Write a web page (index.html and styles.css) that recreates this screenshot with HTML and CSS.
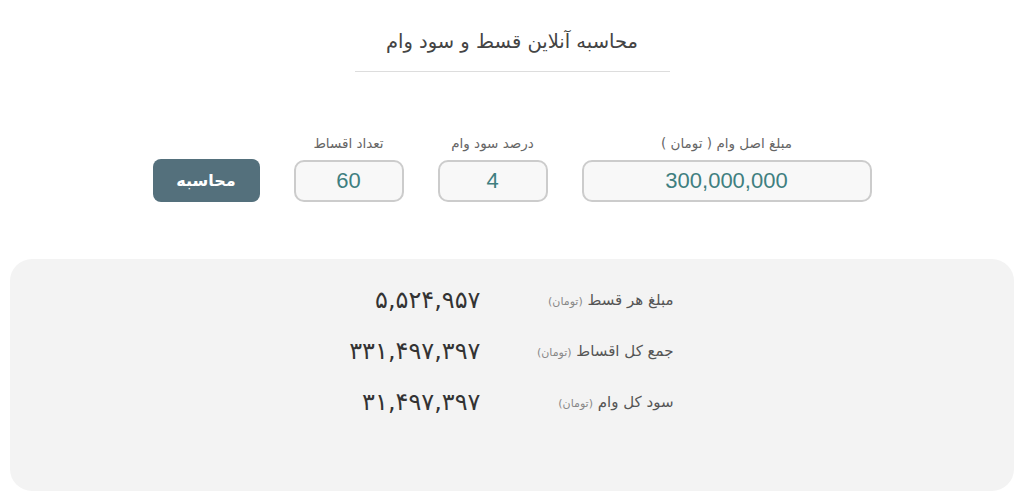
FILE: index.html
```html
<!DOCTYPE html>
<html lang="fa" dir="rtl">
<head>
    <meta charset="utf-8">
    <title>محاسبه آنلاین قسط و سود وام</title>
    <link rel="stylesheet" href="styles.css">
</head>
<body>
    <div class="calculator">
        <div class="title">
            <h1>محاسبه آنلاین قسط و سود وام</h1>
        </div>

        <div class="form">
            <div class="field field-wide">
                <label>مبلغ اصل وام ( تومان )</label>
                <input type="text" value="300,000,000">
            </div>
            <div class="field">
                <label>درصد سود وام</label>
                <input type="text" value="4">
            </div>
            <div class="field">
                <label>تعداد اقساط</label>
                <input type="text" value="60">
            </div>
            <button class="calc-btn">محاسبه</button>
        </div>

        <div class="results">
            <div class="result-row">
                <div class="result-label">مبلغ هر قسط <span class="unit">(تومان)</span></div>
                <div class="result-value">۵,۵۲۴,۹۵۷</div>
            </div>
            <div class="result-row">
                <div class="result-label">جمع کل اقساط <span class="unit">(تومان)</span></div>
                <div class="result-value">۳۳۱,۴۹۷,۳۹۷</div>
            </div>
            <div class="result-row">
                <div class="result-label">سود کل وام <span class="unit">(تومان)</span></div>
                <div class="result-value">۳۱,۴۹۷,۳۹۷</div>
            </div>
        </div>
    </div>
</body>
</html>
```

FILE: styles.css
```css
body {
    margin: 0;
    font-family: "DejaVu Sans", sans-serif;
    background: #fff;
    color: #444;
}
.calculator {
    padding: 0 10px;
}
.title {
    display: flex;
    justify-content: center;
    padding-top: 30px;
}
.title h1 {
    margin: 0;
    width: 315px;
    text-align: center;
    font-size: 19.5px;
    font-weight: normal;
    color: #444;
    padding-bottom: 18px;
    border-bottom: 1px solid #ddd;
}
.form {
    display: flex;
    justify-content: center;
    align-items: flex-end;
    gap: 34px;
    margin-top: 63px;
}
.field {
    display: flex;
    flex-direction: column;
    align-items: center;
    gap: 9px;
}
.field label {
    font-size: 13.5px;
    color: #666;
}
.field input {
    width: 110px;
    height: 42px;
    box-sizing: border-box;
    border: 2px solid #ccc;
    border-radius: 10px;
    background: #f8f8f8;
    text-align: center;
    font-family: "Liberation Sans", Arial, sans-serif;
    font-size: 22px;
    color: #3f7f80;
    outline: none;
}
.field-wide input {
    width: 290px;
}
.calc-btn {
    width: 107px;
    height: 43px;
    border: none;
    border-radius: 8px;
    background: #54707c;
    color: #fff;
    font-family: "DejaVu Sans", sans-serif;
    font-size: 16px;
    font-weight: bold;
}
.results {
    margin-top: 57px;
    background: #f3f3f3;
    border-radius: 22px;
    height: 232px;
    box-sizing: border-box;
    padding-top: 25px;
    display: flex;
    flex-direction: column;
    align-items: center;
    gap: 19px;
}
.result-row {
    display: grid;
    grid-template-columns: 193px 130px;
    align-items: center;
    height: 32px;
}
.result-label {
    font-size: 15px;
    color: #555;
}
.unit {
    font-size: 11px;
    color: #888;
}
.result-value {
    font-size: 24px;
    color: #333;
}
```
